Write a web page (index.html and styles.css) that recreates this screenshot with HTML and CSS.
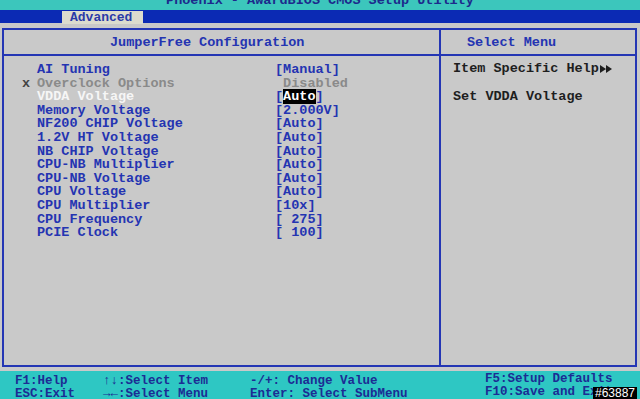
FILE: index.html
```html
<!DOCTYPE html>
<html lang="en">
<head>
  <meta charset="UTF-8" />
  <meta name="viewport" content="width=device-width, initial-scale=1.0" />
  <title>Phoenix - AwardBIOS CMOS Setup Utility</title>
  <link rel="stylesheet" href="styles.css">
</head>
<body>

  <div class="title-bar"><span>Phoenix - AwardBIOS CMOS Setup Utility</span></div>

  <div class="menu-bar">
    <span class="tab">Advanced</span>
  </div>

  <div class="screen">
    <div class="panel">
      <div class="panel-head left-head">JumperFree Configuration</div>
      <div class="panel-head right-head">Select Menu</div>

      <div class="items">
        <div class="row"><span class="mark"></span><span class="label">AI Tuning</span><span class="value">[Manual]</span></div>
        <div class="row disabled"><span class="mark">x</span><span class="label">Overclock Options</span><span class="value"> Disabled</span></div>
        <div class="row current"><span class="mark"></span><span class="label">VDDA Voltage</span><span class="value">[<b class="hl">Auto</b>]</span></div>
        <div class="row"><span class="mark"></span><span class="label">Memory Voltage</span><span class="value">[2.000V]</span></div>
        <div class="row"><span class="mark"></span><span class="label">NF200 CHIP Voltage</span><span class="value">[Auto]</span></div>
        <div class="row"><span class="mark"></span><span class="label">1.2V HT Voltage</span><span class="value">[Auto]</span></div>
        <div class="row"><span class="mark"></span><span class="label">NB CHIP Voltage</span><span class="value">[Auto]</span></div>
        <div class="row"><span class="mark"></span><span class="label">CPU-NB Multiplier</span><span class="value">[Auto]</span></div>
        <div class="row"><span class="mark"></span><span class="label">CPU-NB Voltage</span><span class="value">[Auto]</span></div>
        <div class="row"><span class="mark"></span><span class="label">CPU Voltage</span><span class="value">[Auto]</span></div>
        <div class="row"><span class="mark"></span><span class="label">CPU Multiplier</span><span class="value">[10x]</span></div>
        <div class="row"><span class="mark"></span><span class="label">CPU Frequency</span><span class="value">[ 275]</span></div>
        <div class="row"><span class="mark"></span><span class="label">PCIE Clock</span><span class="value">[ 100]</span></div>
      </div>

      <div class="help">
        <p>Item Specific Help<svg class="arrows" width="12" height="8" viewBox="0 0 12 8"><path d="M0 0 L6 4 L0 8 Z M6 0 L12 4 L6 8 Z" fill="#1e1e1e"/></svg></p>
        <p class="help-text">Set VDDA Voltage</p>
      </div>
    </div>
  </div>

  <div class="footer">
    <div class="keys"><span>F1:Help</span><span>ESC:Exit</span></div>
    <div class="keys"><span>↑↓:Select Item</span><span>→←:Select Menu</span></div>
    <div class="keys"><span>-/+: Change Value</span><span>Enter: Select SubMenu</span></div>
    <div class="keys right-keys"><span>F5:Setup Defaults</span><span>F10:Save and Exit</span></div>
  </div>

  <div class="tag">#63887</div>

</body>
</html>
```

FILE: styles.css
```css
body {
  margin: 0;
  height: 399px;
  overflow: hidden;
  background: #c9c9c9;
  font-family: "Liberation Mono", "DejaVu Sans Mono", monospace;
  font-size: 13.5px;
  font-weight: bold;
  color: #2434b2;
  position: relative;
}
.title-bar {
  height: 10px;
  overflow: hidden;
  background: #3cc6bc;
  text-align: center;
  color: #1c2a8c;
}
.title-bar span {
  display: block;
  line-height: 16px;
  margin-top: -7px;
}
.menu-bar {
  height: 13px;
  background: #0b2ab4;
  padding-left: 62px;
}
.menu-bar .tab {
  display: inline-block;
  width: 81px;
  height: 13px;
  line-height: 13px;
  padding-left: 8px;
  box-sizing: border-box;
  background: #dcdcce;
  color: #2a3aa8;
  font-size: 13px;
}
.screen {
  padding: 5px 3px 4px 2px;
}
.panel {
  height: 339px;
  box-sizing: border-box;
  border: 2px solid #2436b4;
  display: grid;
  grid-template-columns: 435px 1fr;
  grid-template-rows: 26px 1fr;
}
.panel-head {
  line-height: 26px;
  border-bottom: 2px solid #2436b4;
}
.left-head {
  padding-left: 106px;
}
.right-head {
  border-left: 2px solid #2436b4;
  padding-left: 26px;
}
.items {
  padding-top: 7px;
}
.row {
  display: grid;
  grid-template-columns: 15px 238px auto;
  padding-left: 18px;
  line-height: 13.6px;
  white-space: pre;
}
.row.disabled {
  color: #8a8a8a;
}
.row.disabled .mark {
  color: #444;
}
.row.current .label {
  color: #f6f6f6;
}
.hl {
  background: #000;
  color: #fff;
}
.help {
  border-left: 2px solid #2436b4;
  padding: 6px 0 0 12px;
  color: #1e1e1e;
}
.help p {
  margin: 0;
  line-height: 14px;
}
.help .help-text {
  margin-top: 14px;
}
.arrows {
  margin-left: 1px;
  vertical-align: -1px;
}
.footer {
  height: 28px;
  box-sizing: border-box;
  background: #2ec7c3;
  color: #1c2c94;
  padding: 4px 0 0 15px;
  display: grid;
  grid-template-columns: 88px 147px 235px 1fr;
  font-size: 12.5px;
}
.keys span {
  display: block;
  line-height: 13px;
  white-space: pre;
}
.right-keys {
  margin-top: -2px;
}
.tag {
  position: absolute;
  right: 3px;
  bottom: 0;
  background: #000;
  color: #fff;
  font-family: "Liberation Sans", sans-serif;
  font-weight: normal;
  font-size: 12px;
  line-height: 12px;
  padding: 0 2px;
}
```
